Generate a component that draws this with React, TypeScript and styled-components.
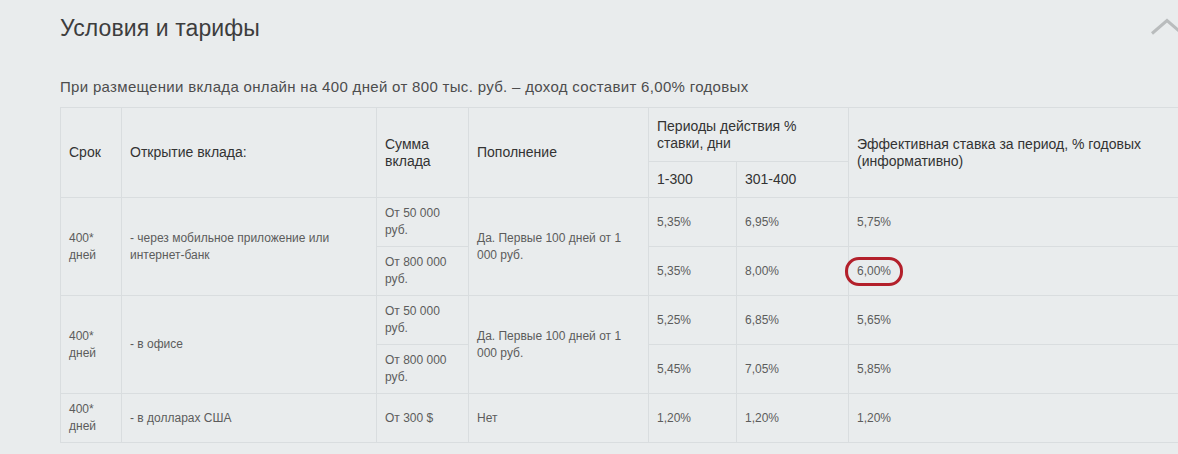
import React from "react";
import styled, { createGlobalStyle } from "styled-components";

const GlobalStyle = createGlobalStyle`
  html, body {
    margin: 0;
    padding: 0;
    background: #e9eced;
    overflow: hidden;
  }
  body {
    width: 1178px;
    height: 454px;
    font-family: "Liberation Sans", Arial, sans-serif;
  }
`;

const Page = styled.div`
  box-sizing: border-box;
  width: 1178px;
  height: 454px;
  padding: 14px 0 0 60px;
  overflow: hidden;
`;

const Header = styled.div`
  display: flex;
  align-items: flex-start;
  justify-content: space-between;
  width: 1118px;
`;

const Title = styled.h2`
  margin: 0;
  font-size: 23px;
  line-height: 28px;
  font-weight: 400;
  color: #3d3d3d;
  letter-spacing: 0.1px;
`;

const Chevron = styled.svg`
  margin-top: 4px;
  flex: none;
`;

const Lead = styled.p`
  margin: 35px 0 10px;
  font-size: 15px;
  line-height: 20px;
  letter-spacing: 0.32px;
  color: #4d4d4d;
`;

const Table = styled.table`
  border-collapse: collapse;
  table-layout: fixed;
  width: 1140px;
`;

const Row = styled.tr<{ $h: number }>`
  height: ${(p) => p.$h}px;
`;

const Th = styled.th`
  border: 1px solid #d9dddf;
  padding: 0 16px 0 8px;
  text-align: left;
  vertical-align: middle;
  font-size: 14px;
  line-height: 17px;
  font-weight: 400;
  color: #333;
`;

const Td = styled.td`
  border: 1px solid #d9dddf;
  padding: 0 16px 0 8px;
  vertical-align: middle;
  font-size: 12px;
  line-height: 17px;
  color: #5c5c5c;
`;

const Circled = styled.span`
  display: inline-block;
  margin-left: -12px;
  padding: 3px 9px;
  border: 3px solid #b3202b;
  border-radius: 14px;
  color: #5c5c5c;
`;

const cols = [61, 255, 92, 180, 88, 112, 352];

type DataRow = {
  term?: string;
  channel?: string;
  span?: number;
  sum: string;
  topup?: string;
  a: string;
  b: string;
  eff: React.ReactNode;
};

const rows: DataRow[] = [
  {
    term: "400* дней",
    channel: "- через мобильное приложение или интернет-банк",
    span: 2,
    sum: "От 50 000 руб.",
    topup: "Да. Первые 100 дней от 1 000 руб.",
    a: "5,35%",
    b: "6,95%",
    eff: "5,75%",
  },
  { sum: "От 800 000 руб.", a: "5,35%", b: "8,00%", eff: <Circled>6,00%</Circled> },
  {
    term: "400* дней",
    channel: "- в офисе",
    span: 2,
    sum: "От 50 000 руб.",
    topup: "Да. Первые 100 дней от 1 000 руб.",
    a: "5,25%",
    b: "6,85%",
    eff: "5,65%",
  },
  { sum: "От 800 000 руб.", a: "5,45%", b: "7,05%", eff: "5,85%" },
  {
    term: "400* дней",
    channel: "- в долларах США",
    span: 1,
    sum: "От 300 $",
    topup: "Нет",
    a: "1,20%",
    b: "1,20%",
    eff: "1,20%",
  },
];

export default function App() {
  return (
    <>
      <GlobalStyle />
      <Page>
        <Header>
          <Title>Условия и тарифы</Title>
          <Chevron width="28" height="18" viewBox="0 0 28 18">
            <path d="M2 15.5 L17 2.5 L32 15.5" fill="none" stroke="#b9bcbd" strokeWidth="3" />
          </Chevron>
        </Header>
        <Lead>
          При размещении вклада онлайн на 400 дней от 800 тыс. руб. – доход составит 6,00% годовых
        </Lead>
        <Table>
          <colgroup>
            {cols.map((w, i) => (
              <col key={i} style={{ width: w }} />
            ))}
          </colgroup>
          <thead>
            <Row $h={54}>
              <Th rowSpan={2}>Срок</Th>
              <Th rowSpan={2}>Открытие вклада:</Th>
              <Th rowSpan={2}>Сумма вклада</Th>
              <Th rowSpan={2}>Пополнение</Th>
              <Th colSpan={2}>Периоды действия % ставки, дни</Th>
              <Th rowSpan={2}>Эффективная ставка за период, % годовых (информативно)</Th>
            </Row>
            <Row $h={36}>
              <Th>1-300</Th>
              <Th>301-400</Th>
            </Row>
          </thead>
          <tbody>
            {rows.map((r, i) => (
              <Row $h={49} key={i}>
                {r.term && <Td rowSpan={r.span}>{r.term}</Td>}
                {r.channel && <Td rowSpan={r.span}>{r.channel}</Td>}
                <Td>{r.sum}</Td>
                {r.topup && <Td rowSpan={r.span}>{r.topup}</Td>}
                <Td>{r.a}</Td>
                <Td>{r.b}</Td>
                <Td>{r.eff}</Td>
              </Row>
            ))}
          </tbody>
        </Table>
      </Page>
    </>
  );
}
